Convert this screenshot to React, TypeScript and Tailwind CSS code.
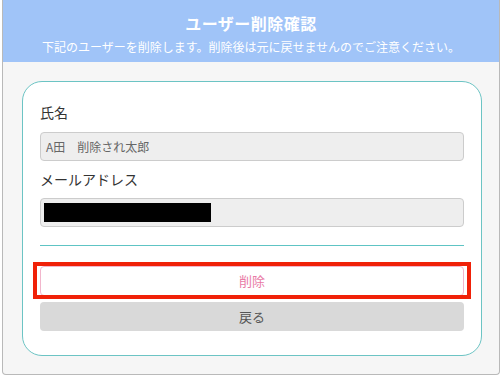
import React from "react";

export default function App() {
  const font = { fontFamily: '"Noto Sans CJK JP", "Noto Sans", sans-serif' };
  return (
    <div className="w-[500px] h-[377px] bg-white" style={font}>
      <div className="ml-[2px] w-[498px] h-[375px] border-l border-r border-b border-[#b9b9b9] rounded-b-[4px] bg-[#f6f6f6] overflow-hidden flex flex-col">
        <div className="h-[62px] bg-[#a0c4f8] flex flex-col items-center text-white">
          <div className="mt-[12px] text-[16px] leading-[22px] font-bold tracking-[0.5px]">ユーザー削除確認</div>
          <div className="mt-[4px] text-[12px] leading-[18px]">下記のユーザーを削除します。削除後は元に戻せませんのでご注意ください。</div>
        </div>
        <div className="pt-[19px] pl-[19px] pr-[17px]">
          <div className="h-[275px] bg-white border border-[#6cc4c4] rounded-[20px] px-[17px] pt-[20px]">
            <div className="text-[14px] leading-[20px] text-[#333]">氏名</div>
            <div className="mt-[10px] h-[29px] bg-[#eeeeee] border border-[#cccccc] rounded-[4px] flex items-center px-[5px] text-[12px] text-[#666]">
              A田　削除され太郎
            </div>
            <div className="mt-[8px] text-[14px] leading-[20px] text-[#333]">メールアドレス</div>
            <div className="mt-[9px] h-[29px] bg-[#eeeeee] border border-[#cccccc] rounded-[4px] flex items-center px-[3px]">
              <div className="w-[167px] h-[19px] bg-black" />
            </div>
            <div className="mt-[18px] border-t border-[#5ec4c4]" />
            <div className="relative mt-[20px]">
              <div className="h-[30px] bg-white border border-[#f2b6cc] rounded-[4px] flex items-center justify-center text-[13px] text-[#e97aa6]">
                削除
              </div>
              <div className="absolute left-[-7px] top-[-4px] w-[438px] h-[37px] border-[4px] border-[#f02108]" />
            </div>
            <div className="mt-[6px] h-[29px] bg-[#d9d9d9] rounded-[4px] flex items-center justify-center text-[13px] text-[#555]">
              戻る
            </div>
          </div>
        </div>
      </div>
    </div>
  );
}
